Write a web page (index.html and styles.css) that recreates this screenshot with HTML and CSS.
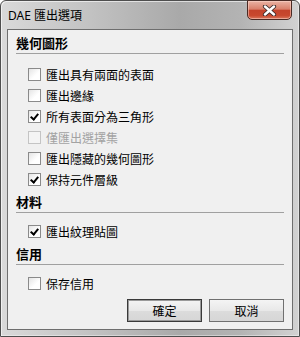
FILE: index.html
```html
<!DOCTYPE html>
<html lang="zh-Hant">
<head>
    <meta charset="UTF-8">
    <title>DAE 匯出選項</title>
    <link rel="stylesheet" href="styles.css">
</head>
<body>
    <div class="window">
        <div class="titlebar">
            <span class="title">DAE 匯出選項</span>
            <div class="close-btn">
                <svg width="17" height="11" viewBox="0 0 17 11">
                    <path d="M4 1.5 L13 9.5 M13 1.5 L4 9.5" stroke="#3b2a2a" stroke-width="4.2" stroke-linecap="round"/>
                    <path d="M4 1.5 L13 9.5 M13 1.5 L4 9.5" stroke="#fff" stroke-width="2.4" stroke-linecap="round"/>
                </svg>
            </div>
        </div>
        <div class="client">
            <div class="group first">
                <div class="group-title">幾何圖形</div>
                <div class="sep"></div>
                <div class="opts">
                    <label class="opt"><span class="box"></span>匯出具有兩面的表面</label>
                    <label class="opt"><span class="box"></span>匯出邊緣</label>
                    <label class="opt"><span class="box checked"></span>所有表面分為三角形</label>
                    <label class="opt disabled"><span class="box"></span>僅匯出選擇集</label>
                    <label class="opt"><span class="box"></span>匯出隱藏的幾何圖形</label>
                    <label class="opt"><span class="box checked"></span>保持元件層級</label>
                </div>
            </div>
            <div class="group">
                <div class="group-title">材料</div>
                <div class="sep"></div>
                <div class="opts">
                    <label class="opt"><span class="box checked"></span>匯出紋理貼圖</label>
                </div>
            </div>
            <div class="group">
                <div class="group-title">信用</div>
                <div class="sep"></div>
                <div class="opts">
                    <label class="opt"><span class="box"></span>保存信用</label>
                </div>
            </div>
            <div class="buttons">
                <button class="btn default">確定</button>
                <button class="btn">取消</button>
            </div>
        </div>
    </div>
</body>
</html>
```
FILE: styles.css
```css
body {
    margin: 0;
    padding: 0;
    background: #fff;
    font-family: "Noto Sans CJK TC", "Liberation Sans", sans-serif;
    font-size: 12px;
    color: #000;
}

.window {
    width: 300px;
    height: 337px;
    box-sizing: border-box;
    border: 1px solid #4e4e4e;
    border-radius: 6px 6px 0 0;
    background: linear-gradient(to right, #d9d9d9, #c2c2c2 30%, #a9a9a9 60%, #b3b3b3 80%, #d2d2d2);
    box-shadow: inset 1px 1px 0 rgba(255,255,255,.6), inset -1px -1px 0 rgba(255,255,255,.4);
    display: flex;
    flex-direction: column;
}

.titlebar {
    height: 28px;
    display: flex;
    justify-content: space-between;
    align-items: flex-start;
}

.title {
    font-family: "Noto Sans", "Noto Sans CJK TC", sans-serif;
    font-size: 12px;
    line-height: 16px;
    margin: 7px 0 0 7px;
}

.close-btn {
    width: 43px;
    height: 18px;
    margin: -1px 7px 0 0;
    border: 1px solid #4a2a24;
    border-radius: 0 0 5px 5px;
    background: linear-gradient(#eab3a4, #d9806b 45%, #c4432b 52%, #c8482e 80%, #d9765c);
    box-shadow: inset 0 0 0 1px rgba(255,220,210,.5);
    display: flex;
    align-items: center;
    justify-content: center;
}

.client {
    flex: 1;
    margin: 0 6px 6px;
    border: 1px solid #6e6e6e;
    background: #f0f0f0;
    padding: 5px 8px 0;
}

.group {
    margin-top: 4px;
}

.group.first {
    margin-top: 0;
}

.group-title {
    font-weight: bold;
    font-size: 13px;
    line-height: 16px;
    height: 16px;
}

.sep {
    margin-top: 2px;
    border-top: 1px solid #a0a0a0;
}

.opts {
    padding: 8px 0 0 12px;
}

.first .opts {
    padding-top: 10px;
}

.opt {
    display: flex;
    align-items: center;
    height: 21px;
    line-height: 21px;
}

.box {
    width: 11px;
    height: 11px;
    border: 1px solid #8a8a8a;
    background: linear-gradient(135deg, #e4e4e4, #fff 60%);
    margin-right: 5px;
    position: relative;
}

.box.checked::after {
    content: "";
    position: absolute;
    left: 3px;
    top: 1px;
    width: 3px;
    height: 6px;
    border: solid #000;
    border-width: 0 2px 2px 0;
    transform: rotate(40deg);
}

.opt.disabled {
    color: #a3a3a3;
}

.opt.disabled .box {
    border-color: #c4c4c4;
    background: #f4f4f4;
}

.buttons {
    display: flex;
    justify-content: flex-end;
    gap: 7px;
    margin-top: 5px;
}

.btn {
    width: 75px;
    height: 23px;
    font-family: "Noto Sans CJK TC", sans-serif;
    font-size: 12px;
    border: 1px solid #707070;
    border-radius: 0;
    background: linear-gradient(#f4f4f4, #e8e8e8 50%, #dcdcdc 51%, #d6d6d6);
    padding: 0;
    color: #000;
}

.btn.default {
    border-color: #3a3a3a;
    box-shadow: inset 0 0 0 1px #9a9a9a;
}
```
